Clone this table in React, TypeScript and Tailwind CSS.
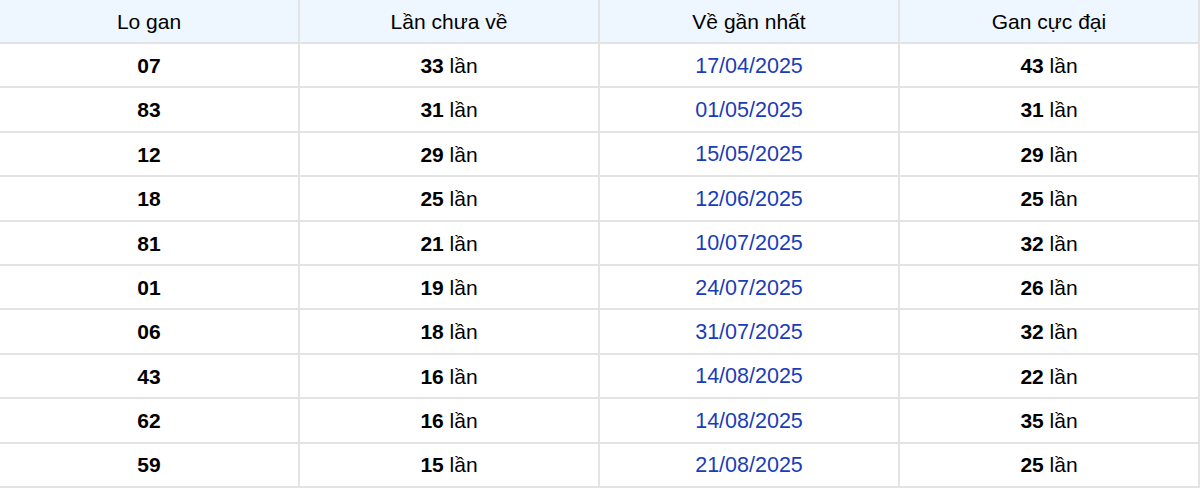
import React from "react";

const rows: [string, string, string, string][] = [
  ["07", "33", "17/04/2025", "43"],
  ["83", "31", "01/05/2025", "31"],
  ["12", "29", "15/05/2025", "29"],
  ["18", "25", "12/06/2025", "25"],
  ["81", "21", "10/07/2025", "32"],
  ["01", "19", "24/07/2025", "26"],
  ["06", "18", "31/07/2025", "32"],
  ["43", "16", "14/08/2025", "22"],
  ["62", "16", "14/08/2025", "35"],
  ["59", "15", "21/08/2025", "25"],
];

export default function App() {
  return (
    <div className="w-[1200px] h-[489px] bg-white" style={{ fontFamily: '"Liberation Sans", Arial, sans-serif' }}>
      <div className="grid grid-cols-4 text-[21px] text-black">
        {["Lo gan", "Lần chưa về", "Về gần nhất", "Gan cực đại"].map((h) => (
          <div key={h} className="h-[44px] pt-[1px] flex items-center justify-center bg-[#eef6ff] border-b-2 border-r-2 border-[#e3e3e3]">
            {h}
          </div>
        ))}
        {rows.map((r, i) => (
          <React.Fragment key={i}>
            <div className="h-[44.4px] pt-[1px] flex items-center justify-center border-b-2 border-r-2 border-[#e3e3e3] font-bold">{r[0]}</div>
            <div className="h-[44.4px] pt-[1px] flex items-center justify-center border-b-2 border-r-2 border-[#e3e3e3]">
              <span className="font-bold">{r[1]}</span>&nbsp;lần
            </div>
            <div className="h-[44.4px] pt-[1px] flex items-center justify-center border-b-2 border-r-2 border-[#e3e3e3] text-[#1a3cb8] text-[21.5px]">{r[2]}</div>
            <div className="h-[44.4px] pt-[1px] flex items-center justify-center border-b-2 border-r-2 border-[#e3e3e3]">
              <span className="font-bold">{r[3]}</span>&nbsp;lần
            </div>
          </React.Fragment>
        ))}
      </div>
    </div>
  );
}
